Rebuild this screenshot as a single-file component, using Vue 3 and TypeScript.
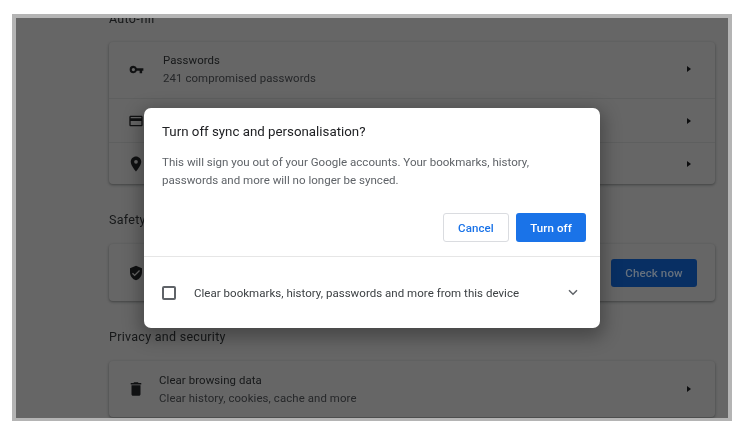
<script setup lang="ts">
interface Row { icon: string; title?: string; sub?: string }
const autofill: Row[] = [
  { icon: 'key', title: 'Passwords', sub: '241 compromised passwords' },
  { icon: 'card' },
  { icon: 'pin' },
]
</script>

<template>
  <div class="shot">
    <div class="frame">
      <div class="page">
        <div class="column">
          <h2 class="heading first">Auto-fill</h2>
          <section class="card">
            <div v-for="(row, i) in autofill" :key="row.icon" class="row" :class="`row-${i}`">
              <span class="icon" :class="`icon-${row.icon}`">
                <svg v-if="row.icon === 'key'" viewBox="0 0 24 24"><path fill-rule="evenodd" d="M12.65 10A6 6 0 0 0 7 6a6 6 0 0 0 0 12 6 6 0 0 0 5.65-4H17v4h4v-4h2v-4H12.65zM7 14.6a2.6 2.6 0 1 1 0-5.2 2.6 2.6 0 0 1 0 5.2z" /></svg>
                <svg v-else-if="row.icon === 'card'" viewBox="0 0 24 24"><path d="M20 4H4c-1.1 0-2 .9-2 2v12c0 1.1.9 2 2 2h16c1.1 0 2-.9 2-2V6c0-1.1-.9-2-2-2zm0 14H4v-6h16v6zm0-10H4V6h16v2z" /></svg>
                <svg v-else viewBox="0 0 24 24"><path d="M12 2C8.13 2 5 5.13 5 9c0 5.25 7 13 7 13s7-7.75 7-13c0-3.87-3.13-7-7-7zm0 9.5a2.5 2.5 0 1 1 0-5 2.5 2.5 0 0 1 0 5z" /></svg>
              </span>
              <div v-if="row.title" class="texts">
                <div class="title">{{ row.title }}</div>
                <div class="sub">{{ row.sub }}</div>
              </div>
              <span class="arrow"></span>
            </div>
          </section>

          <h2 class="heading">Safety check</h2>
          <section class="card">
            <div class="row safety">
              <span class="icon">
                <svg viewBox="0 0 24 24"><path d="M12 1 3 5v6c0 5.55 3.84 10.74 9 12 5.16-1.26 9-6.45 9-12V5l-9-4zm-2 16-4-4 1.41-1.41L10 14.17l6.59-6.59L18 9l-8 8z" /></svg>
              </span>
              <button class="check">Check now</button>
            </div>
          </section>

          <h2 class="heading">Privacy and security</h2>
          <section class="card">
            <div class="row privacy">
              <span class="icon icon-pin">
                <svg viewBox="0 0 24 24"><path d="M6 19c0 1.1.9 2 2 2h8c1.1 0 2-.9 2-2V7H6v12zM19 4h-3.5l-1-1h-5l-1 1H5v2h14V4z" /></svg>
              </span>
              <div class="texts">
                <div class="title">Clear browsing data</div>
                <div class="sub">Clear history, cookies, cache and more</div>
              </div>
              <span class="arrow"></span>
            </div>
          </section>
        </div>

        <div class="scrim"></div>

        <div class="dialog">
          <div class="dialog-main">
            <h1 class="dialog-title">Turn off sync and personalisation?</h1>
            <p class="dialog-body">This will sign you out of your Google accounts. Your bookmarks, history, passwords and more will no longer be synced.</p>
            <div class="actions">
              <button class="btn cancel">Cancel</button>
              <button class="btn primary">Turn off</button>
            </div>
          </div>
          <div class="dialog-foot">
            <span class="checkbox"></span>
            <span class="foot-label">Clear bookmarks, history, passwords and more from this device</span>
            <svg class="chevron" viewBox="0 0 12 8"><path d="M1.2 1.4 6 6l4.8-4.6" /></svg>
          </div>
        </div>
      </div>
    </div>
  </div>
</template>

<style>
html, body { margin: 0; background: #fff; }
</style>

<style scoped>
.shot {
  width: 739px;
  height: 429px;
  box-sizing: border-box;
  padding: 14px 7px 8px 12px;
  font-family: Roboto, "Liberation Sans", sans-serif;
  overflow: hidden;
}
.frame {
  height: 100%;
  box-sizing: border-box;
  border: 4px solid #b4b4b4;
  border-bottom-width: 3px;
  filter: blur(0.75px);
}
.page {
  position: relative;
  height: 100%;
  overflow: hidden;
  background: #fff;
}
.column {
  margin: -7px 0 0 93px;
  width: 606px;
}
.heading {
  margin: 0;
  font-size: 12.5px;
  font-weight: 400;
  line-height: 16px;
  letter-spacing: 0.28px;
  color: #3c4043;
  padding: 28px 0 16px;
  height: 16px;
  box-sizing: content-box;
}
.heading.first { padding: 0 0 15px; }
.card {
  background: #fff;
  border-radius: 4px;
  box-shadow: 0 1px 2px rgba(60, 64, 67, .3), 0 1px 3px 1px rgba(60, 64, 67, .15);
}
.row {
  display: flex;
  align-items: center;
  height: 44px;
  box-sizing: border-box;
  padding: 0 24px 0 19px;
  border-top: 1px solid #eceded;
}
.row:first-child { border-top: 0; }
.row-0 { height: 56px; padding-bottom: 2px; }
.row-2 { height: 42px; }
.row.privacy { height: 56px; }
.row.safety { height: 57px; padding-right: 18px; }
.icon {
  width: 16px;
  height: 16px;
  flex: none;
}
.icon svg { display: block; width: 100%; height: 100%; fill: #2a2b2e; }
.icon-key svg { width: 15px; height: 15px; margin: .5px; }
.icon-pin svg { width: 18px; height: 18px; margin: -1px; }
.texts {
  margin-left: 19px;
  flex: 1;
}
.privacy .texts { margin-left: 15px; }
.title, .sub {
  font-size: 11.4px;
  line-height: 18px;
  letter-spacing: 0.1px;
  color: #3c4043;
}
.sub { color: #5f6368; }
.arrow {
  margin-left: auto;
  width: 0;
  height: 0;
  border-left: 4px solid #202124;
  border-top: 3.5px solid transparent;
  border-bottom: 3.5px solid transparent;
}
.check {
  position: relative;
  z-index: 1;
  margin-left: auto;
  width: 86px;
  height: 28px;
  border: 0;
  border-radius: 3px;
  background: #082f63;
  color: #66717e;
  font: 500 11.5px Roboto, sans-serif;
  letter-spacing: 0.1px;
}
.scrim {
  position: absolute;
  inset: 0;
  background: rgba(0, 0, 0, .6);
}
.dialog {
  position: absolute;
  z-index: 2;
  left: 128px;
  top: 90px;
  width: 456px;
  height: 220px;
  display: flex;
  flex-direction: column;
  background: #fff;
  border-radius: 7px;
  box-shadow: 0 6px 18px 4px rgba(0, 0, 0, .3);
}
.dialog-main {
  height: 149px;
  box-sizing: border-box;
  padding: 15px 14px 0 18px;
  border-bottom: 1px solid #e6e6e6;
  display: flex;
  flex-direction: column;
}
.dialog-title {
  margin: 0;
  font-size: 13.3px;
  line-height: 18px;
  font-weight: 400;
  color: #202124;
}
.dialog-body {
  margin: 12px 0 0;
  width: 400px;
  font-size: 11.55px;
  line-height: 18px;
  color: #5f6368;
}
.actions {
  margin-top: 24px;
  display: flex;
  justify-content: flex-end;
  gap: 7px;
}
.btn {
  height: 29px;
  box-sizing: border-box;
  border-radius: 3px;
  font: 500 11.5px Roboto, sans-serif;
  letter-spacing: 0.1px;
}
.cancel {
  width: 66px;
  background: #fff;
  color: #1a73e8;
  border: 1px solid #dadce0;
}
.primary {
  width: 70px;
  background: #1a73e8;
  color: #fff;
  border: 0;
}
.dialog-foot {
  flex: 1;
  display: flex;
  align-items: center;
  padding: 0 22px 0 18px;
}
.checkbox {
  width: 14px;
  height: 14px;
  box-sizing: border-box;
  border: 2px solid #5f6368;
  border-radius: 2px;
}
.foot-label {
  margin-left: 18px;
  font-size: 11.5px;
  letter-spacing: 0.03px;
  color: #3c4043;
}
.chevron {
  margin-left: auto;
  width: 10px;
  height: 7px;
  fill: none;
  stroke: #5f6368;
  stroke-width: 1.8;
}
</style>
